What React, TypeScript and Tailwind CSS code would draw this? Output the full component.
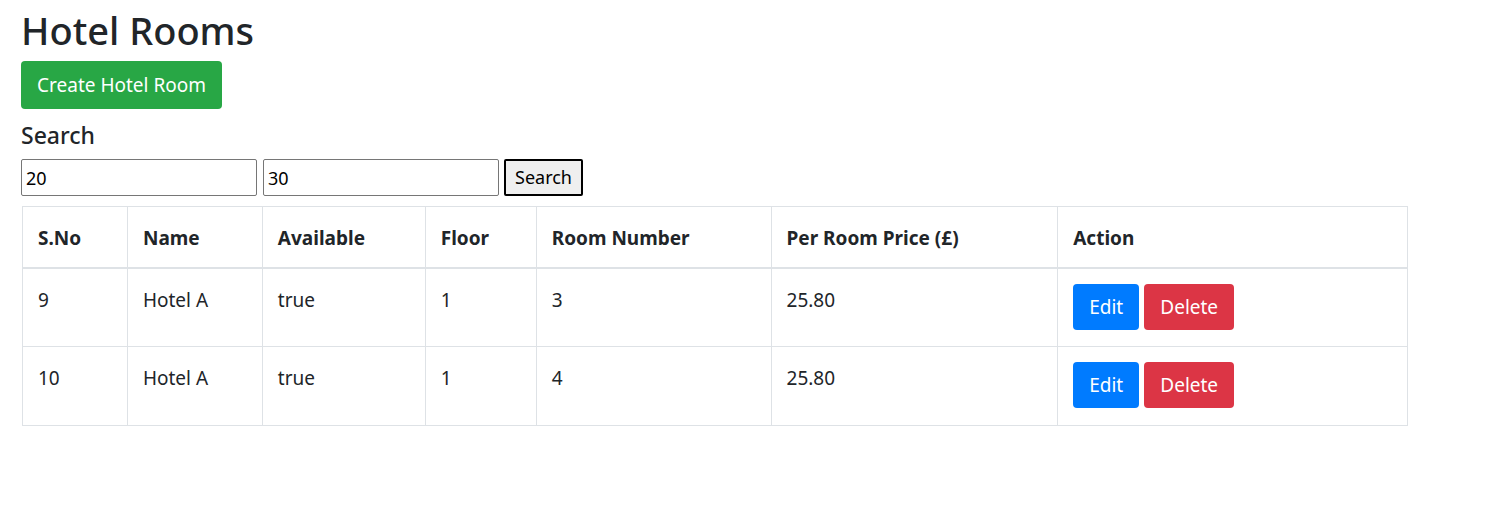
import React from "react";

const rows = [
  { sno: "9", name: "Hotel A", available: "true", floor: "1", room: "3", price: "25.80" },
  { sno: "10", name: "Hotel A", available: "true", floor: "1", room: "4", price: "25.80" },
];

const cols = [
  { label: "S.No", w: "w-[105px]" },
  { label: "Name", w: "w-[135px]" },
  { label: "Available", w: "w-[163px]" },
  { label: "Floor", w: "w-[111px]" },
  { label: "Room Number", w: "w-[235px]" },
  { label: "Per Room Price (£)", w: "w-[287px]" },
  { label: "Action", w: "w-[350px]" },
];

export default function App() {
  return (
    <div className="min-h-[513px] bg-white px-[21px] text-[#212529] font-['Noto_Sans',sans-serif]">
      <h1 className="pt-[4px] text-[38px] leading-[52px] font-medium">Hotel Rooms</h1>
      <button className="mt-[5px] h-[48px] w-[201px] rounded-[4px] bg-[#28a745] text-[19px] text-white">
        Create Hotel Room
      </button>
      <div className="mt-[11px] text-[23px] leading-[30px] font-medium">Search</div>
      <div className="mt-[9px] flex items-center gap-[6px]">
        <input
          defaultValue="20"
          className="h-[37px] w-[236px] rounded-[2px] border border-[#767676] px-[4px] text-[18px] text-black outline-none"
        />
        <input
          defaultValue="30"
          className="h-[37px] w-[236px] rounded-[2px] border border-[#767676] px-[4px] text-[18px] text-black outline-none"
        />
        <button className="-ml-[1px] h-[37px] w-[79px] rounded-[2px] border-2 border-black bg-[#efefef] text-[18px] text-black">
          Search
        </button>
      </div>
      <table className="mt-[10px] ml-[1px] w-[1386px] border-collapse border border-[#dee2e6] text-[19px] leading-[30px]">
        <thead>
          <tr className="h-[61px]">
            {cols.map((c) => (
              <th
                key={c.label}
                className={`${c.w} border border-b-2 border-[#dee2e6] px-[15px] pt-[2px] text-left align-middle font-bold`}
              >
                {c.label}
              </th>
            ))}
          </tr>
        </thead>
        <tbody>
          {rows.map((r) => (
            <tr key={r.sno} className="h-[79px]">
              {[r.sno, r.name, r.available, r.floor, r.room, r.price].map((v, i) => (
                <td key={i} className="border border-[#dee2e6] px-[15px] pt-[16px] align-top">
                  {v}
                </td>
              ))}
              <td className="border border-[#dee2e6] px-[15px] py-[15px] align-top">
                <div className="flex gap-[5px]">
                  <button className="h-[46px] w-[66px] rounded-[4px] bg-[#007bff] text-[19px] text-white">
                    Edit
                  </button>
                  <button className="h-[46px] w-[90px] rounded-[4px] bg-[#dc3545] text-[19px] text-white">
                    Delete
                  </button>
                </div>
              </td>
            </tr>
          ))}
        </tbody>
      </table>
    </div>
  );
}
